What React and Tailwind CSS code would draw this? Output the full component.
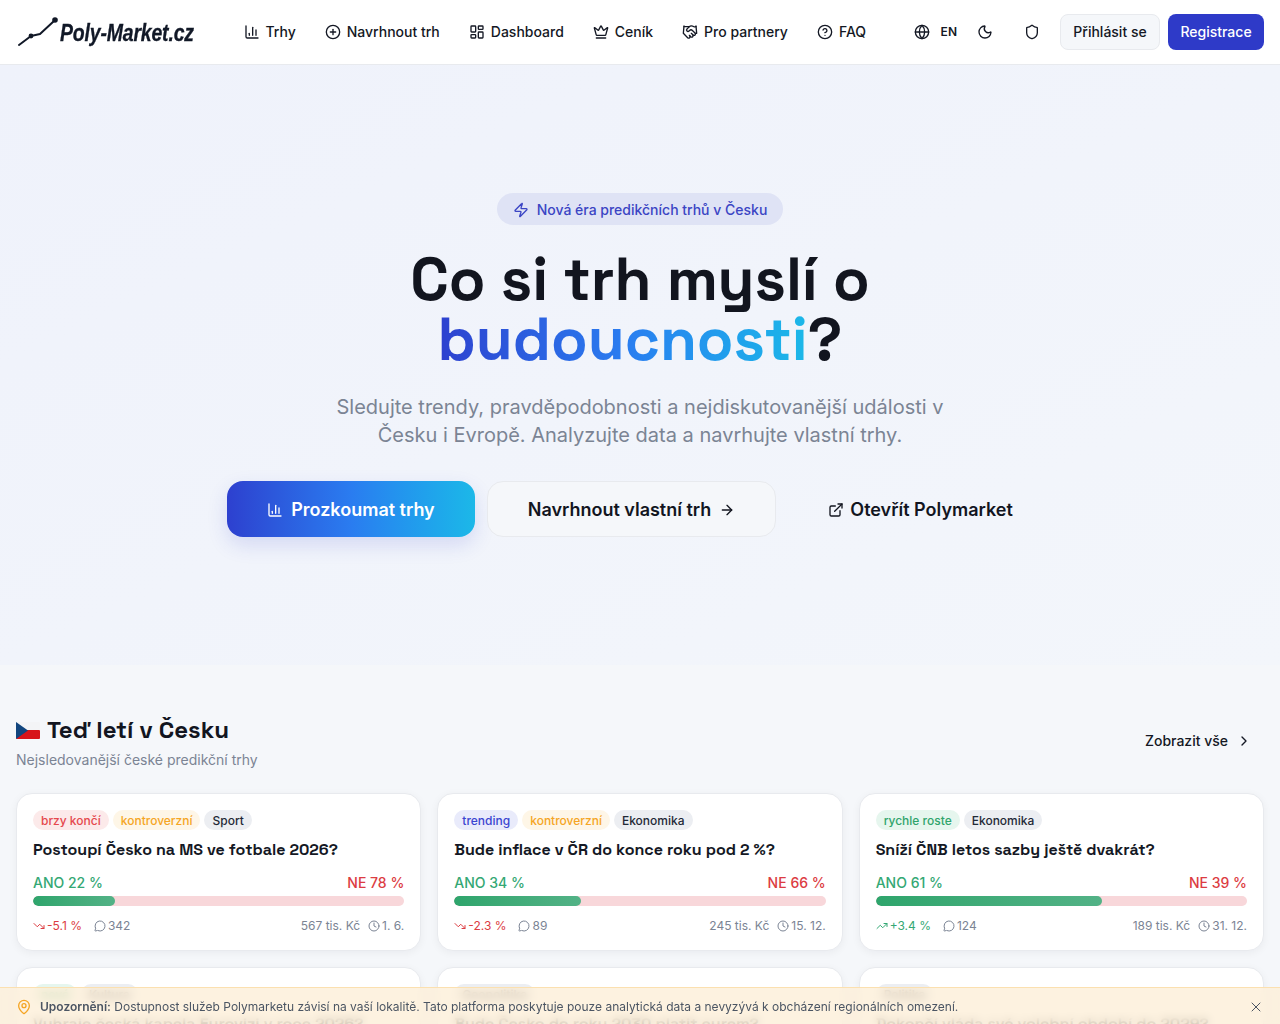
import React from "react";
import {
  ChartColumn, CirclePlus, LayoutDashboard, Crown, Handshake, CircleHelp, Globe, Moon, Shield, Zap,
  ArrowRight, ExternalLink, ChevronRight, TrendingDown, TrendingUp, MessageCircle, Clock, MapPin, X,
} from "lucide-react";

const nav = [
  [ChartColumn, "Trhy"],
  [CirclePlus, "Navrhnout trh"],
  [LayoutDashboard, "Dashboard"],
  [Crown, "Ceník"],
  [Handshake, "Pro partnery"],
  [CircleHelp, "FAQ"],
];

const tagStyles = {
  red: "bg-[#fceaea] text-[#e5484d]",
  amber: "bg-[#fef6e7] text-[#f5a524]",
  gray: "bg-[#eceef2] text-[#1f2937]",
  blue: "bg-[#e9ebfb] text-[#3b45d1]",
  green: "bg-[#e6f6ee] text-[#30a46c]",
};

const cards = [
  { tags: [["brzy končí", "red"], ["kontroverzní", "amber"], ["Sport", "gray"]], title: "Postoupí Česko na MS ve fotbale 2026?", yes: 22, trend: "-5.1 %", up: false, comments: 342, vol: "567 tis. Kč", date: "1. 6." },
  { tags: [["trending", "blue"], ["kontroverzní", "amber"], ["Ekonomika", "gray"]], title: "Bude inflace v ČR do konce roku pod 2 %?", yes: 34, trend: "-2.3 %", up: false, comments: 89, vol: "245 tis. Kč", date: "15. 12." },
  { tags: [["rychle roste", "green"], ["Ekonomika", "gray"]], title: "Sníží ČNB letos sazby ještě dvakrát?", yes: 61, trend: "+3.4 %", up: true, comments: 124, vol: "189 tis. Kč", date: "31. 12." },
  { tags: [["nové", "green"], ["Kultura", "gray"]], title: "Vyhraje česká kapela Eurovizi v roce 2026?", yes: 18, trend: "+1.2 %", up: true, comments: 56, vol: "98 tis. Kč", date: "20. 5." },
  { tags: [["Geopolitika", "gray"]], title: "Bude Česko do roku 2030 platit eurem?", yes: 12, trend: "-0.8 %", up: false, comments: 210, vol: "312 tis. Kč", date: "31. 12." },
  { tags: [["Politika", "gray"]], title: "Dokončí vláda své volební období do 2029?", yes: 47, trend: "+0.6 %", up: true, comments: 77, vol: "150 tis. Kč", date: "1. 10." },
];

const display = "font-['Space_Grotesk','Inter',sans-serif]";

function Logo() {
  return (
    <div className="flex w-[176px] shrink-0 items-center">
      <svg width="42" height="32" viewBox="0 0 42 32" className="shrink-0 text-[#111827]">
        <path d="M1 29 L13 20 L22 18 L36 5" fill="none" stroke="currentColor" strokeWidth="2" strokeLinecap="round" strokeLinejoin="round" />
        <circle cx="13" cy="20" r="2.4" fill="currentColor" />
        <circle cx="37" cy="4" r="2.8" fill="currentColor" />
      </svg>
      <span className="mt-[2px] inline-block origin-left scale-x-[0.81] whitespace-nowrap font-['Liberation_Sans',sans-serif] text-[24px] font-bold italic leading-none tracking-[-0.2px] text-[#111827] [-webkit-text-stroke:0.3px_#111827]">Poly-Market.cz</span>
    </div>
  );
}

function Card({ c }) {
  return (
    <div className="h-[158px] overflow-hidden rounded-2xl border border-[#e8eaee] bg-white p-4 shadow-[0_2px_8px_rgba(17,24,39,0.05)]">
      <div className="flex gap-1">
        {c.tags.map(([t, k]) => (
          <span key={t} className={`rounded-full px-2 pb-[1px] pt-[3px] text-xs font-[450] leading-4 ${tagStyles[k]}`}>{t}</span>
        ))}
      </div>
      <h3 className={`mt-2 text-base font-semibold leading-6 text-[#141824] ${display}`}>{c.title}</h3>
      <div className="mt-[11px] flex justify-between text-sm font-medium leading-5">
        <span className="text-[#34a874]">ANO {c.yes} %</span>
        <span className="text-[#dc3c42]">NE {100 - c.yes} %</span>
      </div>
      <div className="mt-[3px] h-[10px] overflow-hidden rounded-full bg-[#f8d7da]">
        <div className="h-full rounded-full bg-gradient-to-r from-[#2ea56c] to-[#52b286]" style={{ width: `${c.yes}%` }} />
      </div>
      <div className="mt-3 flex items-center justify-between text-xs leading-4 text-[#7b8494]">
        <div className="flex items-center gap-3">
          <span className={`flex items-center gap-[2px] ${c.up ? "text-[#34a874]" : "text-[#dc3c42]"}`}>
            {c.up ? <TrendingUp size={12} /> : <TrendingDown size={12} />}
            {c.trend}
          </span>
          <span className="flex items-center gap-[2px]"><MessageCircle size={12} />{c.comments}</span>
        </div>
        <div className="flex items-center gap-2">
          <span>{c.vol}</span>
          <span className="flex items-center gap-[2px]"><Clock size={12} />{c.date}</span>
        </div>
      </div>
    </div>
  );
}

export default function App() {
  return (
    <div className="h-screen overflow-hidden bg-[#f5f7fa] font-['Inter',sans-serif]">
      <header className="flex h-[65px] items-center justify-between border-b border-[#e8eaee] bg-white pl-[18px] pr-4">
        <Logo />
        <nav className="ml-[35px] flex items-center">
          {nav.map(([I, t]) => (
            <a key={t} className="flex items-center gap-[6px] px-[14.5px] text-sm font-medium leading-5 text-[#141824]">
              <I size={16} />{t}
            </a>
          ))}
        </nav>
        <div className="ml-auto flex items-center">
          <span className="flex items-center gap-[11px] text-xs font-semibold text-[#141824]"><Globe size={16} />EN</span>
          <Moon size={16} className="ml-5 text-[#141824]" />
          <Shield size={16} className="ml-[31px] text-[#141824]" />
          <button className="ml-5 h-9 w-[100px] rounded-lg border border-[#e8eaee] bg-[#f5f7fa] text-sm font-medium text-[#141824]">Přihlásit se</button>
          <button className="ml-2 h-9 w-[96px] rounded-lg bg-[#2e3ac8] text-sm font-medium text-white">Registrace</button>
        </div>
      </header>

      <section className="flex h-[600px] flex-col items-center bg-gradient-to-br from-[#eff2fb] to-[#f3f6fb] pt-32 text-center">
        <div className="flex h-8 items-center gap-2 rounded-full bg-[#dfe3f5] px-4 pt-[1px] text-sm font-medium text-[#3b45c4]">
          <Zap size={16} />Nová éra predikčních trhů v Česku
        </div>
        <h1 className={`mt-[25px] text-[60px] font-bold leading-[60px] text-[#12151f] ${display}`}>
          Co si trh myslí o<br />
          <span className="bg-gradient-to-r from-[#2d40cf] via-[#2a7cf0] to-[#1cb8e8] bg-clip-text text-transparent">budoucnosti</span>?
        </h1>
        <p className="mt-[23px] w-[672px] text-xl leading-7 text-[#7b8494]">
          Sledujte trendy, pravděpodobnosti a nejdiskutovanější události v Česku i Evropě. Analyzujte data a navrhujte vlastní trhy.
        </p>
        <div className="mt-8 flex gap-3">
          <button className="flex h-14 items-center gap-2 rounded-2xl bg-gradient-to-r from-[#2d40cf] via-[#2a7cf0] to-[#1cb8e8] px-10 pt-[2px] text-lg font-semibold text-white shadow-[0_8px_20px_rgba(46,58,200,0.15)]">
            <ChartColumn size={16} />Prozkoumat trhy
          </button>
          <button className="flex h-14 items-center gap-2 rounded-2xl border border-[#e8eaee] bg-[#f5f7fa] px-10 pt-[2px] text-lg font-semibold text-[#12151f]">
            Navrhnout vlastní trh<ArrowRight size={16} />
          </button>
          <button className="flex h-14 items-center gap-[6px] rounded-2xl px-10 pt-[2px] text-lg font-semibold text-[#12151f]">
            <ExternalLink size={16} />Otevřít Polymarket
          </button>
        </div>
      </section>

      <section className="px-4 pt-12">
        <div className="flex items-center justify-between">
          <div>
            <h2 className={`flex items-center gap-[7px] pt-[1px] text-2xl font-semibold leading-8 text-[#12151f] ${display}`}>
              <svg width="24" height="17" viewBox="0 0 24 17" className="shrink-0">
                <rect width="24" height="9" y="0" rx="1" fill="#f3f4f6" />
                <rect width="24" height="9" y="8" rx="1" fill="#d7141a" />
                <path d="M0 0 L12 8.5 L0 17 Z" fill="#11457e" />
              </svg>
              Teď letí v Česku
            </h2>
            <p className="mt-1 text-sm leading-5 text-[#7b8494]">Nejsledovanější české predikční trhy</p>
          </div>
          <a className="mb-[2px] mr-3 flex items-center gap-2 text-sm font-medium text-[#141824]">Zobrazit vše<ChevronRight size={16} /></a>
        </div>
        <div className="mt-[23px] grid grid-cols-3 gap-4">
          {cards.map((c) => <Card key={c.title} c={c} />)}
        </div>
      </section>

      <div className="fixed inset-x-0 bottom-0 flex h-[37px] items-center justify-between border-t border-[#fbe0b0] bg-[#fcefd8]/80 px-4 pt-[1px] text-xs text-[#4b5563] backdrop-blur-xs">
        <div className="flex items-center gap-2">
          <MapPin size={16} className="text-[#f5a524]" />
          <span><strong className="font-semibold">Upozornění:</strong> Dostupnost služeb Polymarketu závisí na vaší lokalitě. Tato platforma poskytuje pouze analytická data a nevyzývá k obcházení regionálních omezení.</span>
        </div>
        <X size={16} strokeWidth={1.5} />
      </div>
    </div>
  );
}
